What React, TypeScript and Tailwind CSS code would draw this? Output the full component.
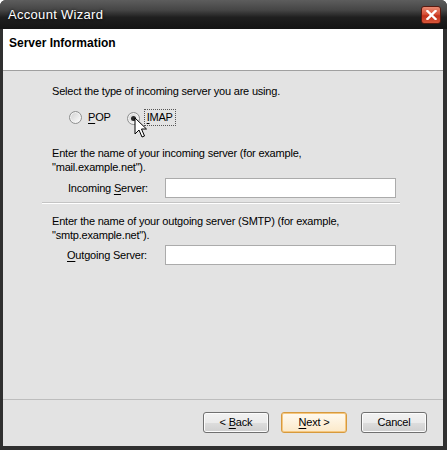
import React from "react";

function U({ children }: { children: React.ReactNode }) {
  return <span className="underline underline-offset-[2px] decoration-[1px]">{children}</span>;
}

function Radio({ checked }: { checked?: boolean }) {
  return (
    <span className="relative inline-flex w-[13px] h-[13px] rounded-full border border-[#8e8f8f] bg-[linear-gradient(135deg,#cfcfcf,#ffffff)] items-center justify-center shadow-[inset_0_0_0_1px_#f4f4f4]">
      {checked && <span className="w-[5px] h-[5px] rounded-full bg-[#2a2a2a]" />}
    </span>
  );
}

function Btn({ children, def }: { children: React.ReactNode; def?: boolean }) {
  return (
    <div
      className={
        "w-[66px] h-[21px] rounded-[3px] flex items-center justify-center text-[11px] text-black " +
        (def
          ? "border border-[#d69a3e] bg-[linear-gradient(#fffaf0,#fbe9c9)] shadow-[inset_0_0_0_1px_#f6c77e]"
          : "border border-[#707070] bg-[linear-gradient(#f2f2f2_0%,#ebebeb_50%,#dddddd_51%,#cfcfcf_100%)] shadow-[inset_0_0_0_1px_#fcfcfc]")
      }
    >
      {children}
    </div>
  );
}

export default function App() {
  return (
    <div
      className="w-[447px] h-[450px] bg-white overflow-hidden"
      style={{ fontFamily: '"Liberation Sans", Arial, sans-serif' }}
    >
      <div className="w-full h-full rounded-t-[6px] bg-[#303030] flex flex-col overflow-hidden">
        {/* Title bar */}
        <div className="h-[29px] shrink-0 flex items-center justify-between pl-[8px] pr-[6px] bg-[linear-gradient(#5d5d5d_0%,#454545_35%,#1f1f1f_60%,#151515_100%)]">
          <span className="text-white text-[13px] tracking-[0.3px] [text-shadow:0_0_3px_#000]">
            Account Wizard
          </span>
          <div className="w-[20px] h-[18px] rounded-[3px] border border-[#5a1a10] bg-[linear-gradient(#e98a72_0%,#d9533a_45%,#c2311b_55%,#d8573a_100%)] flex items-center justify-center">
            <svg width="11" height="10" viewBox="0 0 11 10">
              <path d="M1.5 1 L9.5 9 M9.5 1 L1.5 9" stroke="#ffffff" strokeWidth="2.4" strokeLinecap="square" />
            </svg>
          </div>
        </div>
        {/* Content */}
        <div className="flex-1 flex flex-col ml-[3px] mr-[4px] mb-[4px]">
          <div className="h-[42px] shrink-0 bg-white border-b border-[#a0a0a0] pl-[6px] pt-[1px]">
            <span className="text-[12px] font-bold text-black">Server Information</span>
          </div>
          <div className="flex-1 bg-[#e3e3e3] flex flex-col text-[11px] text-black tracking-[-0.2px]">
            <div className="flex-1 relative pl-[39px] pt-[13px]">
              <div className="pl-[10px] leading-[14px]">Select the type of incoming server you are using.</div>
              <div className="flex items-center h-[18px] mt-[10px] pl-[27px]">
                <Radio />
                <span className="ml-[6px]">
                  <U>P</U>OP
                </span>
                <span className="ml-[16px]">
                  <Radio checked />
                </span>
                <span className="ml-[4px] px-[2px] h-[17px] flex items-center border border-dotted border-[#555]">
                  <U>I</U>MAP
                </span>
              </div>
              <div className="pl-[10px] leading-[14px] mt-[20px]">
                Enter the name of your incoming server (for example,
                <br />
                "mail.example.net").
              </div>
              <div className="flex items-center mt-[4px] h-[20px]">
                <span className="w-[123px] pl-[26px]">
                  Incoming <U>S</U>erver:
                </span>
                <div className="w-[231px] h-[20px] bg-white border border-[#ababab]" />
              </div>
              <div className="mt-[4px] w-[358px] h-[2px] border-t border-[#c4c4c4] border-b border-b-white" />
              <div className="pl-[10px] leading-[14px] mt-[10px]">
                Enter the name of your outgoing server (SMTP) (for example,
                <br />
                "smtp.example.net").
              </div>
              <div className="flex items-center mt-[3px] h-[20px]">
                <span className="w-[123px] pl-[25px]">
                  <U>O</U>utgoing Server:
                </span>
                <div className="w-[231px] h-[20px] bg-white border border-[#ababab]" />
              </div>
              {/* mouse cursor */}
              <svg className="absolute left-[131px] top-[46px]" width="14" height="22" viewBox="0 0 14 22">
                <path
                  d="M1 1 L1 17 L5 13 L8 20 L10.5 19 L7.5 12 L12.5 12 Z"
                  fill="#ffffff"
                  stroke="#000000"
                  strokeWidth="1"
                  strokeLinejoin="miter"
                />
              </svg>
            </div>
            <div className="h-[47px] shrink-0 border-t border-[#bdbdbd] flex items-start justify-end pr-[16px] pt-[12px]">
              <Btn>
                {"<\u00a0"}
                <U>B</U>ack
              </Btn>
              <div className="ml-[12px]">
                <Btn def>
                  <U>N</U>ext{"\u00a0>"}
                </Btn>
              </div>
              <div className="ml-[14px]">
                <Btn>Cancel</Btn>
              </div>
            </div>
          </div>
        </div>
      </div>
    </div>
  );
}
